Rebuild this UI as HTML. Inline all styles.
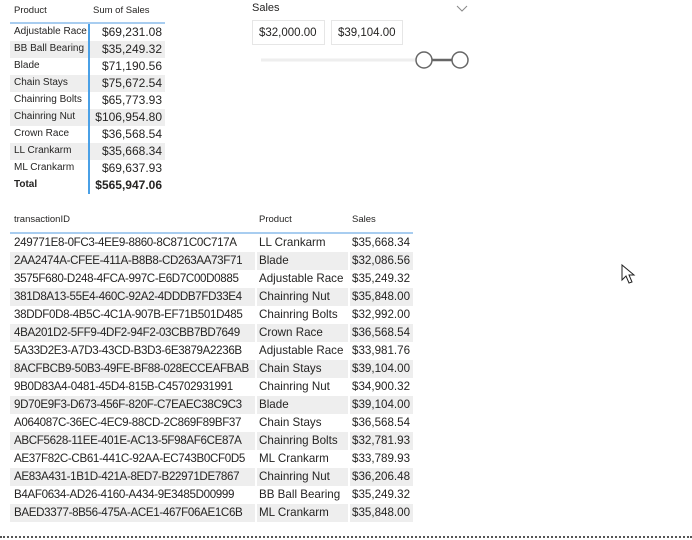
<!DOCTYPE html>
<html><head><meta charset="utf-8"><style>
*{margin:0;padding:0;box-sizing:border-box}
body{width:692px;height:540px;background:#fff;position:relative;overflow:hidden;font-family:"Liberation Sans",sans-serif;color:#252423}
.a{position:absolute;white-space:nowrap}
.t1 .r{position:absolute;left:10px;width:155px;height:17px}
.t1 .r.g{background:#eee}
.t1 .p{position:absolute;left:4px;top:2px;font-size:10px}
.t1 .v{position:absolute;right:3px;top:1px;font-size:12px}
.t2 .r{position:absolute;left:10px;width:403px;height:18px}
.t2 .r.g{background:linear-gradient(to right,#eee 0,#eee 245px,#fff 245px,#fff 247px,#eee 247px,#eee 338px,#fff 338px,#fff 340px,#eee 340px)}
.t2 span{position:absolute;top:2px;font-size:11.6px}
.t2 span:first-child{letter-spacing:-0.35px}
</style></head><body>
<div class="a" style="left:14px;top:5px;font-size:9.5px">Product</div>
<div class="a" style="left:93px;top:5px;font-size:9.5px">Sum of Sales</div>
<div class="a" style="left:10px;top:22px;width:155px;height:2px;background:#a8cdf0"></div>
<div class="t1">
<div class="r" style="top:24px"><span class="p a">Adjustable Race</span><span class="v a">$69,231.08</span></div>
<div class="r g" style="top:41px"><span class="p a">BB Ball Bearing</span><span class="v a">$35,249.32</span></div>
<div class="r" style="top:58px"><span class="p a">Blade</span><span class="v a">$71,190.56</span></div>
<div class="r g" style="top:75px"><span class="p a">Chain Stays</span><span class="v a">$75,672.54</span></div>
<div class="r" style="top:92px"><span class="p a">Chainring Bolts</span><span class="v a">$65,773.93</span></div>
<div class="r g" style="top:109px"><span class="p a">Chainring Nut</span><span class="v a">$106,954.80</span></div>
<div class="r" style="top:126px"><span class="p a">Crown Race</span><span class="v a">$36,568.54</span></div>
<div class="r g" style="top:143px"><span class="p a">LL Crankarm</span><span class="v a">$35,668.34</span></div>
<div class="r" style="top:160px"><span class="p a">ML Crankarm</span><span class="v a">$69,637.93</span></div>
<div class="r" style="top:177px"><span class="p a" style="font-weight:bold">Total</span><span class="v a" style="font-weight:bold">$565,947.06</span></div>
</div>
<div style="position:absolute;left:88px;top:24px;width:1.5px;height:170px;background:#4aa0e6"></div>

<div class="a" style="left:252px;top:2px;font-size:11px">Sales</div>
<svg class="a" style="left:455px;top:3px" width="14" height="10"><path d="M2 3 L7 8 L12 3" fill="none" stroke="#888" stroke-width="1"/></svg>
<div class="a" style="left:252px;top:20px;width:73px;height:25px;border:1px solid #e6e6e6;font-size:11.5px;padding:6px 0 0 6px">$32,000.00</div>
<div class="a" style="left:331px;top:20px;width:72px;height:25px;border:1px solid #e6e6e6;font-size:11.5px;padding:6px 0 0 6px">$39,104.00</div>
<svg class="a" style="left:255px;top:48px" width="220" height="26"><line x1="6" y1="12" x2="160" y2="12" stroke="#eee" stroke-width="3"/><line x1="176" y1="12" x2="198" y2="12" stroke="#666" stroke-width="2.5"/><circle cx="169" cy="12" r="8" fill="#fff" stroke="#666" stroke-width="1.5"/><circle cx="205" cy="12" r="8" fill="#fff" stroke="#666" stroke-width="1.5"/></svg>

<div class="a" style="left:14px;top:214px;font-size:9.5px">transactionID</div>
<div class="a" style="left:259px;top:214px;font-size:9.5px">Product</div>
<div class="a" style="left:352px;top:214px;font-size:9.5px">Sales</div>
<div class="a" style="left:10px;top:232px;width:403px;height:2px;background:#a8cdf0"></div>
<div class="t2">
<div class="r" style="top:234px"><span style="left:4px">249771E8-0FC3-4EE9-8860-8C871C0C717A</span><span style="left:249px">LL Crankarm</span><span style="left:342px">$35,668.34</span></div>
<div class="r g" style="top:252px"><span style="left:4px">2AA2474A-CFEE-411A-B8B8-CD263AA73F71</span><span style="left:249px">Blade</span><span style="left:342px">$32,086.56</span></div>
<div class="r" style="top:270px"><span style="left:4px">3575F680-D248-4FCA-997C-E6D7C00D0885</span><span style="left:249px">Adjustable Race</span><span style="left:342px">$35,249.32</span></div>
<div class="r g" style="top:288px"><span style="left:4px">381D8A13-55E4-460C-92A2-4DDDB7FD33E4</span><span style="left:249px">Chainring Nut</span><span style="left:342px">$35,848.00</span></div>
<div class="r" style="top:306px"><span style="left:4px">38DDF0D8-4B5C-4C1A-907B-EF71B501D485</span><span style="left:249px">Chainring Bolts</span><span style="left:342px">$32,992.00</span></div>
<div class="r g" style="top:324px"><span style="left:4px">4BA201D2-5FF9-4DF2-94F2-03CBB7BD7649</span><span style="left:249px">Crown Race</span><span style="left:342px">$36,568.54</span></div>
<div class="r" style="top:342px"><span style="left:4px">5A33D2E3-A7D3-43CD-B3D3-6E3879A2236B</span><span style="left:249px">Adjustable Race</span><span style="left:342px">$33,981.76</span></div>
<div class="r g" style="top:360px"><span style="left:4px">8ACFBCB9-50B3-49FE-BF88-028ECCEAFBAB</span><span style="left:249px">Chain Stays</span><span style="left:342px">$39,104.00</span></div>
<div class="r" style="top:378px"><span style="left:4px">9B0D83A4-0481-45D4-815B-C45702931991</span><span style="left:249px">Chainring Nut</span><span style="left:342px">$34,900.32</span></div>
<div class="r g" style="top:396px"><span style="left:4px">9D70E9F3-D673-456F-820F-C7EAEC38C9C3</span><span style="left:249px">Blade</span><span style="left:342px">$39,104.00</span></div>
<div class="r" style="top:414px"><span style="left:4px">A064087C-36EC-4EC9-88CD-2C869F89BF37</span><span style="left:249px">Chain Stays</span><span style="left:342px">$36,568.54</span></div>
<div class="r g" style="top:432px"><span style="left:4px">ABCF5628-11EE-401E-AC13-5F98AF6CE87A</span><span style="left:249px">Chainring Bolts</span><span style="left:342px">$32,781.93</span></div>
<div class="r" style="top:450px"><span style="left:4px">AE37F82C-CB61-441C-92AA-EC743B0CF0D5</span><span style="left:249px">ML Crankarm</span><span style="left:342px">$33,789.93</span></div>
<div class="r g" style="top:468px"><span style="left:4px">AE83A431-1B1D-421A-8ED7-B22971DE7867</span><span style="left:249px">Chainring Nut</span><span style="left:342px">$36,206.48</span></div>
<div class="r" style="top:486px"><span style="left:4px">B4AF0634-AD26-4160-A434-9E3485D00999</span><span style="left:249px">BB Ball Bearing</span><span style="left:342px">$35,249.32</span></div>
<div class="r g" style="top:504px"><span style="left:4px">BAED3377-8B56-475A-ACE1-467F06AE1C6B</span><span style="left:249px">ML Crankarm</span><span style="left:342px">$35,848.00</span></div>
</div>

<svg class="a" style="left:620px;top:263px" width="16" height="22"><path d="M2 2 L2 17 L6 13 L9 20 L12 19 L9 12 L14 12 Z" fill="#fff" stroke="#222" stroke-width="1"/></svg>
<div class="a" style="left:0;top:536px;width:692px;height:0;border-top:2px dotted #555"></div>
</body></html>
